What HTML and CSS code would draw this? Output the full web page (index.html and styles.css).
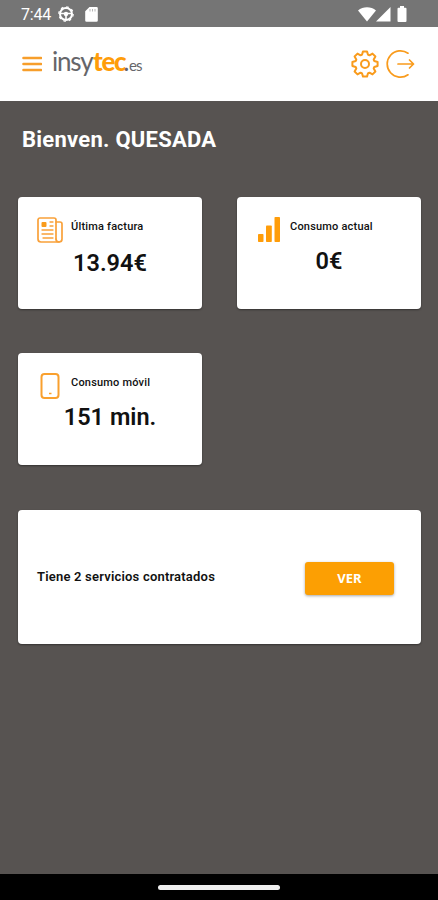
FILE: index.html
```html
<!DOCTYPE html>
<html lang="es">
<head>
  <meta charset="UTF-8">
  <meta name="viewport" content="width=device-width, initial-scale=1">
  <title>Insytec</title>
  <link rel="stylesheet" href="styles.css">
</head>
<body>

  <div class="estado">
    <span class="hora">7:44</span>
    <svg class="volante" width="16" height="16" viewBox="0 0 16 16">
      <circle cx="8" cy="8" r="6" fill="none" stroke="#fff" stroke-width="2"/>
      <circle cx="8" cy="8" r="7.2" fill="none" stroke="#fff" stroke-width="1.2" stroke-dasharray="2.6 3.05"/>
      <path d="M2 7.5h12M8 8v6" stroke="#fff" stroke-width="1.6"/>
      <circle cx="8" cy="8" r="2.2" fill="#fff"/>
    </svg>
    <svg class="tarjeta-sd" width="13" height="15" viewBox="0 0 13 15">
      <path d="M4.5 0H11.5a1.3 1.3 0 0 1 1.3 1.3V13.5a1.3 1.3 0 0 1-1.3 1.3H1.5A1.3 1.3 0 0 1 .2 13.5V4.3z" fill="#fff"/>
      <path d="M5 2v2.5M7.5 2v2.5M10 2v2.5" stroke="#b5b5b5"/>
    </svg>
    <div class="senales">
      <svg width="18" height="15" viewBox="0 0 18 15">
        <path d="M0 3.5C5-.9 13-.9 18 3.5L9 14.5z" fill="#fff"/>
      </svg>
      <svg width="15" height="15" viewBox="0 0 15 15">
        <path d="M14.5 0v14.5H0z" fill="#fff"/>
      </svg>
      <svg class="bateria" width="10" height="16" viewBox="0 0 10 16">
        <path d="M3 0h4v1.7h1.5a1 1 0 0 1 1 1V15a1 1 0 0 1-1 1h-7a1 1 0 0 1-1-1V2.7a1 1 0 0 1 1-1H3z" fill="#fff"/>
      </svg>
    </div>
  </div>

  <header class="cabecera">
    <svg class="menu" width="20" height="16" viewBox="0 0 20 16">
      <path d="M1.5 2h17.5M1.5 8h17.5M1.5 14h17.5" stroke="#f79e2b" stroke-width="2.6" stroke-linecap="round"/>
    </svg>
    <div class="logo"><span class="insy">insy</span><span class="tec">tec</span><span class="punto">.</span><span class="es">es</span></div>
    <div class="acciones">
      <svg width="28" height="28" viewBox="-14 -14 28 28" fill="none" stroke="#f99b1c" stroke-width="2" stroke-linejoin="round">
        <path d="M9.3-3L12.6-2V2L9.3 3Q8.9 3.7 8.7 4.5L10.4 7.5 7.5 10.4 4.5 8.7Q3.7 8.9 3 9.3L2 12.6H-2L-3 9.3Q-3.7 8.9-4.5 8.7L-7.5 10.4-10.4 7.5-8.7 4.5Q-8.9 3.7-9.3 3L-12.6 2V-2L-9.3-3Q-8.9-3.7-8.7-4.5L-10.4-7.5-7.5-10.4-4.5-8.7Q-3.7-8.9-3-9.3L-2-12.6H2L3-9.3Q3.7-8.9 4.5-8.7L7.5-10.4 10.4-7.5 8.7-4.5Q8.9-3.7 9.3-3z"/>
        <circle r="4"/>
      </svg>
      <svg width="29" height="30" viewBox="0 0 29 30" fill="none" stroke="#f99b1c" stroke-width="1.7" stroke-linecap="round" stroke-linejoin="round">
        <path d="M22 4.2A13.2 13.2 0 1 0 22 25.8"/>
        <path d="M12 15h15.5M23.5 11l4 4-4 4"/>
      </svg>
    </div>
  </header>

  <main class="contenido">
    <h1>Bienven. QUESADA</h1>

    <div class="tarjetas">
      <div class="tarjeta">
        <div class="titulo">
          <svg width="26" height="26" viewBox="0 0 26 26" fill="none" stroke="#f9a13a" stroke-width="1.7" stroke-linecap="round" stroke-linejoin="round">
            <path d="M19 22V3a2 2 0 0 0-2-2H3a2 2 0 0 0-2 2v19a3 3 0 0 0 3 3h18"/>
            <path d="M19 5h4a2 2 0 0 1 2 2v15a3 3 0 0 1-6 0"/>
            <path d="M13 5h3M13 9h3M5 13h11M5 17h11M6 21h10" stroke-width="1.3"/>
            <rect x="4.5" y="5" width="5" height="5" rx="1" fill="#f99b1c" stroke="none"/>
          </svg>
          <span>Última factura</span>
        </div>
        <div class="valor">13.94€</div>
      </div>

      <div class="tarjeta consumo">
        <div class="titulo">
          <svg width="26" height="26" viewBox="0 0 26 26" fill="#ff9d0a">
            <rect x="2" y="17" width="5.5" height="8" rx=".8"/>
            <rect x="10" y="8.5" width="5.8" height="16.5" rx=".8"/>
            <rect x="18.5" y="0" width="5.5" height="25" rx=".8"/>
          </svg>
          <span>Consumo actual</span>
        </div>
        <div class="valor">0€</div>
      </div>

      <div class="tarjeta consumo">
        <div class="titulo">
          <svg width="26" height="26" viewBox="0 0 26 26" fill="none" stroke="#f9a02e" stroke-width="2">
            <rect x="4.5" y="1" width="17" height="24" rx="3"/>
            <path d="M12 20.5h2.5" stroke-width="1.5"/>
          </svg>
          <span>Consumo móvil</span>
        </div>
        <div class="valor">151 min.</div>
      </div>
    </div>

    <div class="servicios">
      <span>Tiene 2 servicios contratados</span>
      <button class="ver">VER</button>
    </div>
  </main>

  <div class="navegacion">
    <div class="barra"></div>
  </div>

</body>
</html>
```

FILE: styles.css
```css
* {
  box-sizing: border-box;
}
body {
  margin: 0;
  height: 900px;
  display: flex;
  flex-direction: column;
  font-family: Roboto, sans-serif;
  background-color: #575351;
  color: #111;
  overflow: hidden;
}
svg {
  display: block;
  flex: none;
}
.estado {
  height: 27px;
  flex: none;
  display: flex;
  align-items: center;
  padding: 1px 31px 0 21px;
  background-color: #757575;
  color: white;
}
.hora {
  width: 37px;
  font-size: 16px;
  letter-spacing: -0.2px;
}
.tarjeta-sd {
  margin-left: 11px;
}
.senales {
  display: flex;
  align-items: center;
  margin-left: auto;
}
.bateria {
  margin-left: 6px;
}
.cabecera {
  height: 74px;
  flex: none;
  display: flex;
  align-items: center;
  padding: 0 23px 0 22px;
  background-color: white;
}
.logo {
  display: flex;
  align-items: baseline;
  margin-left: 10px;
  margin-top: -2px;
  font-family: Lato, sans-serif;
  font-size: 26px;
  line-height: 30px;
  color: #66666a;
}
.insy {
  width: 41px;
  font-weight: 400;
  letter-spacing: -1.2px;
}
.tec {
  width: 31px;
  font-weight: 900;
  letter-spacing: -1.3px;
  color: #ff9d0a;
}
.punto {
  width: 5px;
  font-weight: 900;
  font-size: 20px;
}
.es {
  font-size: 15px;
  font-weight: 400;
  letter-spacing: -0.8px;
}
.acciones {
  display: flex;
  align-items: center;
  gap: 7px;
  margin-left: auto;
}
.contenido {
  flex: 1;
  padding: 26px 17px 0 18px;
}
h1 {
  margin: 0 0 44px 4px;
  font-size: 22px;
  line-height: 26px;
  font-weight: 700;
  letter-spacing: 0.25px;
  color: white;
}
.tarjetas {
  display: grid;
  grid-template-columns: 184px 184px;
  gap: 44px 35px;
}
.tarjeta {
  height: 112px;
  padding: 20px 19px;
  border-radius: 4px;
  background-color: white;
  box-shadow: 0 1px 2px rgba(0,0,0,0.4);
}
.titulo {
  display: flex;
  gap: 8px;
  font-size: 11px;
  line-height: 19px;
  font-weight: 500;
  letter-spacing: 0.2px;
}
.valor {
  margin-top: 6px;
  font-size: 23.5px;
  line-height: 28px;
  font-weight: 600;
  text-align: center;
}
.consumo .valor {
  margin-top: 4px;
}
.servicios {
  display: flex;
  align-items: center;
  justify-content: space-between;
  height: 134px;
  margin-top: 45px;
  padding: 0 27px 2px 19px;
  border-radius: 4px;
  background-color: white;
  box-shadow: 0 1px 2px rgba(0,0,0,0.4);
  font-size: 13px;
  font-weight: 600;
  letter-spacing: 0.2px;
}
.ver {
  width: 89px;
  height: 33px;
  margin-top: 4px;
  border: none;
  border-radius: 3px;
  background-color: #fc9f03;
  box-shadow: 0 1px 3px rgba(0,0,0,0.35);
  color: white;
  font-family: "Noto Sans", sans-serif;
  font-size: 13px;
  font-weight: 700;
}
.navegacion {
  height: 26px;
  flex: none;
  display: flex;
  justify-content: center;
  align-items: center;
  background-color: black;
}
.barra {
  width: 122px;
  height: 5px;
  border-radius: 3px;
  background-color: #eee;
}
```
